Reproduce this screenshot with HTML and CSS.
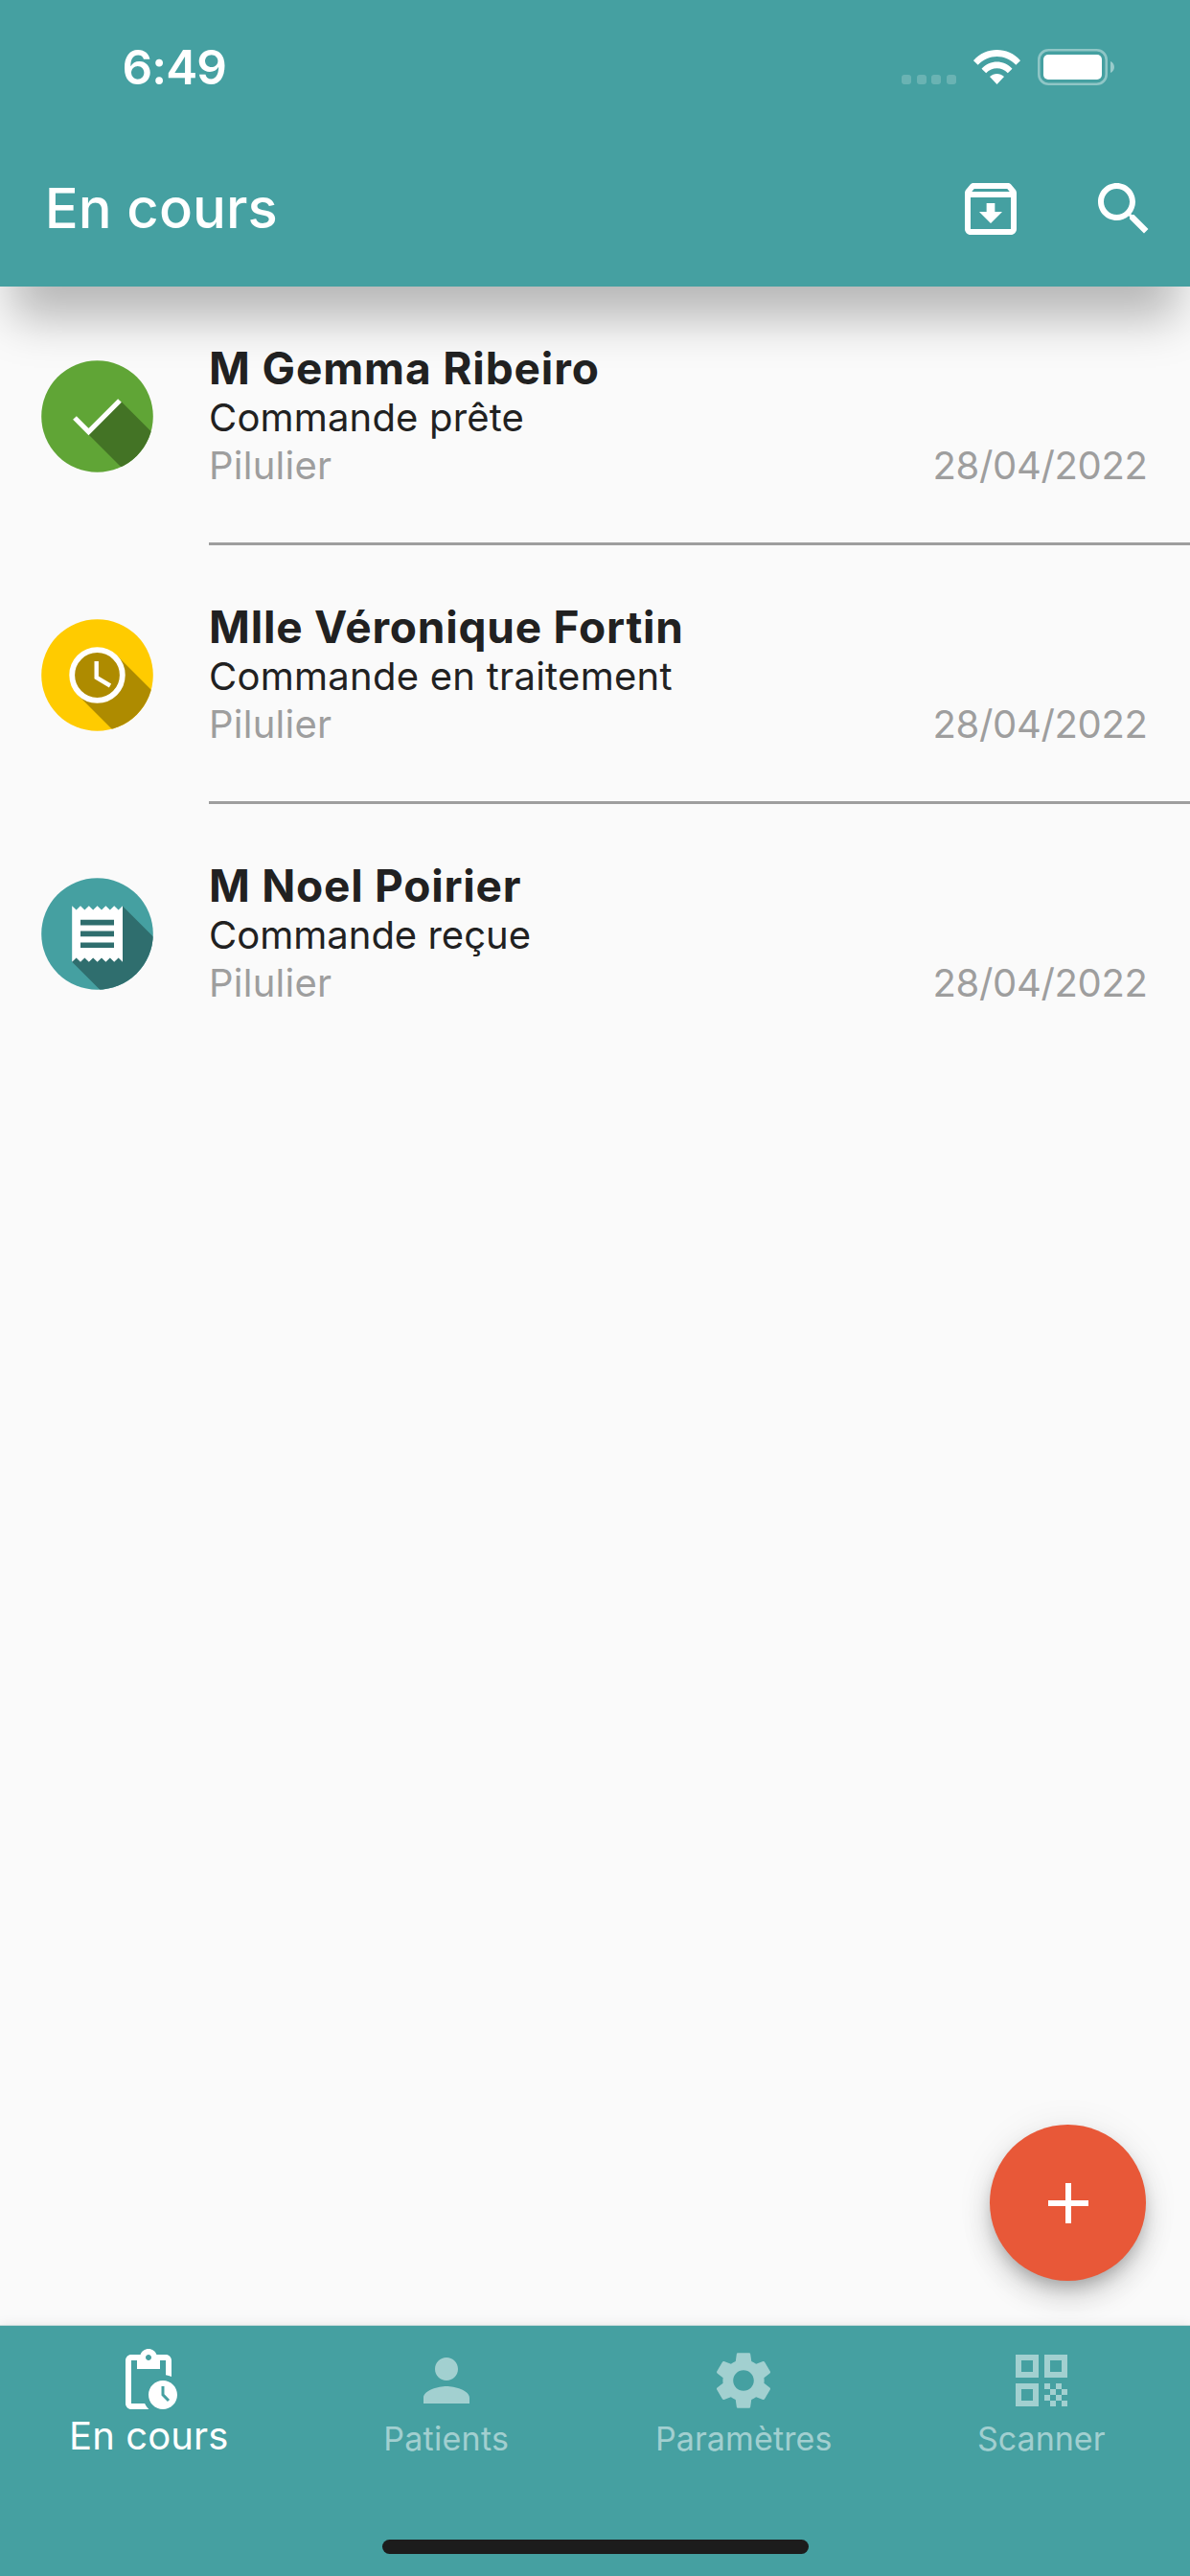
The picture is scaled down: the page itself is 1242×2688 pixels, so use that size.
FILE: index.html
```html
<!DOCTYPE html>
<html lang="fr">
<head>
<meta charset="utf-8">
<title>En cours</title>
<link rel="stylesheet" href="styles.css">
</head>
<body>
<div class="screen">
  <header class="top">
    <div class="status">
      <span class="clock">6:49</span>
      <span class="signal"><i></i><i></i><i></i><i></i></span>
      <svg class="wifi" viewBox="0 0 49 36" fill="#fff">
        <path d="M0 11.2C13-3.7 36-3.7 49 11.2L44.3 15.8C33.5 4 15.500 4 4.700 15.800Z"/>
        <path d="M8.500 19.700C17.500 10.200 31.500 10.200 40.500 19.700L35.800 24.300C29.500 17.500 19.500 17.500 13.200 24.300Z"/>
        <path d="M17 28.100C21.500 23.900 27.500 23.900 32 28.100L24.500 36Z"/>
      </svg>
      <svg class="battery" viewBox="0 0 80 38">
        <rect x="1.300" y="1.300" width="70.400" height="35.400" rx="10" fill="none" stroke="#fff" stroke-opacity=".4" stroke-width="2.600"/>
        <rect x="6" y="6" width="61" height="26" rx="5" fill="#fff"/>
        <path d="M76 13c5.300 2.200 5.300 9.800 0 12Z" fill="#fff" fill-opacity=".45"/>
      </svg>
    </div>
    <div class="appbar">
      <h1>En cours</h1>
      <svg class="icon archive" viewBox="0 0 24 24"><path fill-rule="evenodd" d="M20.540 5.230l-1.390-1.680C18.880 3.210 18.470 3 18 3H6c-.47 0-.88.21-1.160.55L3.460 5.230C3.170 5.570 3 6.020 3 6.500V19c0 1.100.9 2 2 2h14c1.100 0 2-.9 2-2V6.500c0-.48-.17-.93-.46-1.270zM6.240 5h11.520l.83 1H5.420l.82-1zM5 19V8h14v11H5zm8.450-9h-2.900v3H8l4 4 4-4h-2.550z"/></svg>
      <svg class="icon search" viewBox="0 0 24 24"><path d="M15.500 14h-.79l-.28-.27C15.410 12.590 16 11.110 16 9.500 16 5.910 13.090 3 9.500 3S3 5.910 3 9.500 5.910 16 9.500 16c1.610 0 3.090-.59 4.230-1.570l.27.28v.79l5 4.990L20.490 19l-4.990-5zm-6 0C7.010 14 5 11.990 5 9.500S7.010 5 9.500 5 14 7.010 14 9.500 11.990 14 9.500 14z"/></svg>
    </div>
  </header>

  <main class="list">
    <article class="row">
      <svg class="avatar" viewBox="0 0 117 117">
        <defs><clipPath id="disc"><circle cx="58.500" cy="58.500" r="58.300"/></clipPath></defs>
        <circle cx="58.500" cy="58.500" r="58.300" fill="#60a536"/>
        <path clip-path="url(#disc)" d="M49.500 77.500L83.500 43L150 109.500V178Z" fill="#437325"/>
        <path d="M35 60L49.500 74.500L82 42" fill="none" stroke="#fff" stroke-width="5.300"/>
      </svg>
      <div class="text">
        <h2 class="name-ready">M Gemma Ribeiro</h2>
        <p class="state state-ready">Commande prête</p>
        <div class="meta"><span class="kind">Pilulier</span><time>28/04/2022</time></div>
      </div>
    </article>
    <article class="row">
      <svg class="avatar" viewBox="0 0 117 117">
        <circle cx="58.500" cy="58.500" r="58.300" fill="#ffcb00"/>
        <path clip-path="url(#disc)" d="M38 79L79 38L145 104V186Z" fill="#ae8b00"/>
        <circle cx="58.500" cy="58.500" r="26.300" fill="#ae8b00" stroke="#fff" stroke-width="5.800"/>
        <path d="M57.700 44V61L72 69.500" fill="none" stroke="#fff" stroke-width="4.400"/>
      </svg>
      <div class="text">
        <h2 class="name-pending">Mlle Véronique Fortin</h2>
        <p class="state state-pending">Commande en traitement</p>
        <div class="meta"><span class="kind">Pilulier</span><time>28/04/2022</time></div>
      </div>
    </article>
    <article class="row">
      <svg class="avatar" viewBox="0 0 117 117">
        <circle cx="58.500" cy="58.500" r="58.300" fill="#45a0a1"/>
        <path clip-path="url(#disc)" d="M32 87.500L85 29.500L165 109.500V220.500Z" fill="#2f6e6e"/>
        <path d="M32.200 29.200l4.400 4.400 4.400-4.400 4.400 4.400 4.400-4.400 4.400 4.400 4.400-4.400 4.400 4.400 4.400-4.400 4.400 4.400 4.400-4.400 4.400 4.400 4.400-4.400V87.800l-4.400-4.400-4.400 4.400-4.400-4.400-4.400 4.400-4.400-4.400-4.400 4.400-4.400-4.400-4.400 4.400-4.400-4.400-4.400 4.400-4.400-4.400-4.400 4.400Z" fill="#fff"/>
        <path d="M41 46.600H76M41 58.400H76M41 70.200H76" stroke="#2f6e6e" stroke-width="5.600"/>
      </svg>
      <div class="text">
        <h2 class="name-received">M Noel Poirier</h2>
        <p class="state">Commande reçue</p>
        <div class="meta"><span class="kind">Pilulier</span><time>28/04/2022</time></div>
      </div>
    </article>
  </main>

  <button class="fab" aria-label="Ajouter"><svg class="icon" viewBox="0 0 24 24"><path d="M19 13h-6v6h-2v-6H5v-2h6V5h2v6h6v2z"/></svg></button>

  <nav class="tabs">
    <a class="tab active">
      <svg class="icon" viewBox="0 0 24 24"><path d="M17 12c-2.760 0-5 2.240-5 5s2.240 5 5 5 5-2.240 5-5-2.240-5-5-5zm1.650 7.350L16.500 17.200V14h1v2.790l1.850 1.850-.7.710zM18 3h-3.180C14.400 1.840 13.300 1 12 1s-2.400.84-2.820 2H6c-1.100 0-2 .9-2 2v15c0 1.100.9 2 2 2h6.110c-.59-.57-1.070-1.250-1.420-2H6V5h2v3h8V5h2v5.080c.71.1 1.380.31 2 .6V5c0-1.100-.9-2-2-2zm-6 2c-.55 0-1-.45-1-1s.45-1 1-1 1 .45 1 1-.45 1-1 1z"/></svg>
      <span>En cours</span>
    </a>
    <a class="tab">
      <svg class="icon" viewBox="0 0 24 24"><path d="M12 12c2.210 0 4-1.790 4-4s-1.790-4-4-4-4 1.790-4 4 1.790 4 4 4zm0 2c-2.670 0-8 1.340-8 4v2h16v-2c0-2.660-5.330-4-8-4z"/></svg>
      <span class="patients">Patients</span>
    </a>
    <a class="tab">
      <svg class="icon" viewBox="0 0 24 24"><path d="M19.140 12.940c.04-.3.060-.61.060-.94 0-.32-.02-.64-.07-.94l2.030-1.580c.18-.14.23-.41.120-.61l-1.920-3.320c-.12-.22-.37-.29-.59-.22l-2.390.96c-.5-.38-1.030-.7-1.620-.94l-.36-2.540c-.04-.24-.24-.41-.48-.41h-3.840c-.24 0-.43.17-.47.41l-.36 2.540c-.59.24-1.130.57-1.620.94l-2.390-.96c-.22-.08-.47 0-.59.22L2.740 8.870c-.12.21-.08.470.12.610l2.030 1.580c-.05.3-.09.63-.09.940s.02.640.070.940l-2.030 1.580c-.18.140-.23.410-.12.610l1.920 3.320c.12.220.370.290.590.220l2.390-.96c.5.380 1.030.7 1.620.940l.36 2.540c.05.240.240.410.480.410h3.840c.24 0 .44-.17.470-.41l.36-2.540c.59-.24 1.130-.56 1.620-.94l2.390.96c.22.080.470 0 .590-.22l1.920-3.320c.12-.22.070-.47-.12-.61l-2.010-1.580zM12 15.600c-1.980 0-3.600-1.620-3.600-3.600s1.620-3.600 3.600-3.600 3.600 1.620 3.600 3.600-1.620 3.600-3.600 3.600z"/></svg>
      <span class="settings">Paramètres</span>
    </a>
    <a class="tab">
      <svg class="icon" viewBox="0 0 24 24"><path fill-rule="evenodd" d="M3 11h8V3H3v8zm2-6h4v4H5V5zM3 21h8v-8H3v8zm2-6h4v4H5v-4zM13 3v8h8V3h-8zm6 6h-4V5h4v4zM19 19h2v2h-2zM13 13h2v2h-2zM15 15h2v2h-2zM13 17h2v2h-2zM15 19h2v2h-2zM17 17h2v2h-2zM17 13h2v2h-2zM19 15h2v2h-2z"/></svg>
      <span>Scanner</span>
    </a>
    <div class="home"></div>
  </nav>
</div>
</body>
</html>
```
FILE: styles.css
```css
* { box-sizing: border-box; margin: 0; padding: 0; }
body { background: #fafafa; font-family: Inter, "Liberation Sans", sans-serif; }
.screen { position: relative; width: 1242px; height: 2688px; display: flex; flex-direction: column; overflow: hidden; background: #fafafa; }
.icon { width: 72px; height: 72px; fill: currentColor; display: block; flex: none; }

.top { height: 299px; flex: none; background: #45a0a1; color: #fff; box-shadow: 0 46px 46px -13px rgba(0, 0, 0, .27); }
.status { height: 132px; display: flex; align-items: flex-start; padding-left: 127.5px; }
.clock { width: 813.5px; font-size: 49.5px; font-weight: 600; line-height: 60px; padding-top: 40px; letter-spacing: -.9px; }
.signal { display: flex; gap: 5.5px; padding-top: 78px; width: 75px; }
.signal i { width: 10px; height: 10px; border-radius: 3px; background: rgba(255, 255, 255, .2); }
.wifi { width: 49px; height: 36px; margin-top: 52px; }
.battery { width: 80px; height: 38px; margin: 51px 0 0 18px; }
.appbar { height: 167px; display: flex; align-items: flex-start; padding: 49.5px 33px 0 46.7px; }
.appbar h1 { flex: 1; font-size: 58px; font-weight: 500; line-height: 71px; letter-spacing: .1px; }
.archive { margin-right: 67px; }

.list { flex: 1; }
.row { display: flex; height: 270px; padding-left: 43px; }
.avatar { width: 117px; height: 117px; margin: 77px 58px 0 0; flex: none; }
.text { flex: 1; padding: 59px 44.5px 0 0; border-bottom: 3px solid #9e9e9e; }
.row:last-child .text { border-bottom: 0; }
.row h2 { font-size: 46px; font-weight: 700; line-height: 53px; color: #212121; }
.name-ready { letter-spacing: .88px; }
.name-pending { letter-spacing: .78px; }
.name-received { letter-spacing: .76px; }
.state { font-size: 40px; line-height: 49px; color: #212121; }
.state-ready { letter-spacing: .17px; }
.state-pending { letter-spacing: .26px; }
.meta { display: flex; justify-content: space-between; font-size: 40px; line-height: 51px; color: #9e9e9e; }
.kind { letter-spacing: .24px; }
.meta time { letter-spacing: -.35px; }

.fab { position: absolute; left: 1033px; top: 2217px; width: 163px; height: 163px; border: 0; border-radius: 50%; background: #e85838; color: #fff; display: flex; align-items: center; justify-content: center; box-shadow: 0 9px 15px -3px rgba(0, 0, 0, .2), 0 18px 30px rgba(0, 0, 0, .14), 0 3px 40px rgba(0, 0, 0, .07); }

.tabs { position: relative; height: 262px; flex: none; display: flex; background: #45a0a1; border-top: 1px solid #c3d9d9; box-shadow: 0 0 12px rgba(0, 0, 0, .08); }
.tab { flex: 1; display: flex; flex-direction: column; align-items: center; padding-top: 21px; color: rgba(255, 255, 255, .5); font-size: 34px; line-height: 49px; }
.tab.active { color: #fff; font-size: 40px; line-height: 43px; letter-spacing: .1px; }
.patients { letter-spacing: .28px; }
.settings { letter-spacing: .13px; }
.home { position: absolute; left: 399px; top: 223px; width: 445px; height: 15px; border-radius: 8px; background: #1c1c1c; }
```
